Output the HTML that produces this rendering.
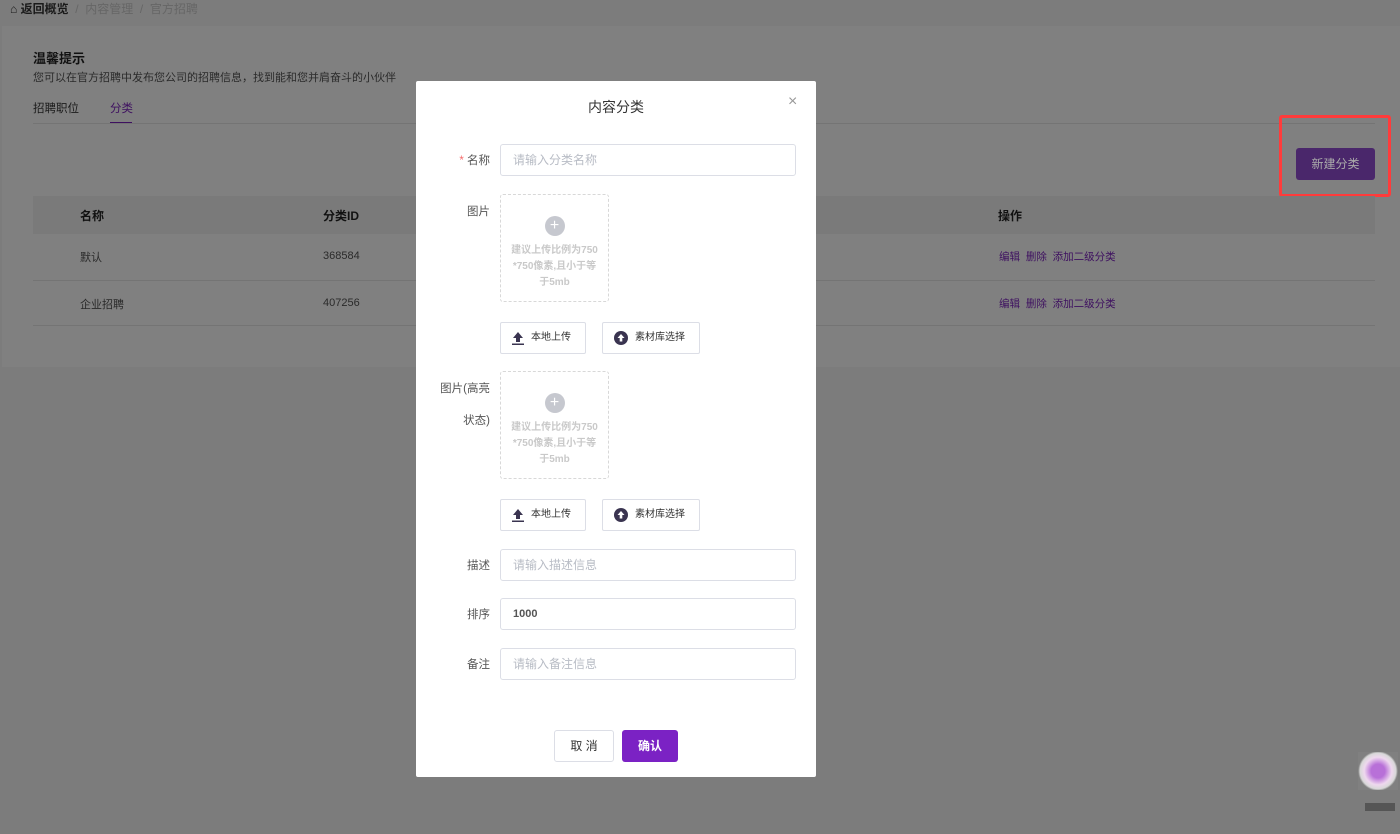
<!DOCTYPE html>
<html><head><meta charset="utf-8"><style>
*{box-sizing:border-box;margin:0;padding:0}
body{width:1400px;height:834px;background:#7c7c7c;font-family:"Liberation Sans","Noto Sans CJK SC",sans-serif;font-size:12px;color:#2a2a2a;position:relative;overflow:hidden}
.abs{position:absolute}
.card{left:2px;top:26px;width:1398px;height:341px;background:#808080}
.th{left:33px;top:196px;width:1342px;height:38px;background:#7a7a7a}
.line{height:1px;background:#747474}
.link{color:#3e1060;font-size:10.5px}
.modal{left:416px;top:81px;width:400px;height:696px;background:#fff;border-radius:2px}
.lbl{font-size:11.5px;color:#555;text-align:right;width:74px}
.inp{left:84px;width:296px;height:32px;border:1px solid #dcdee6;border-radius:3px;font-size:12px;color:#b8bcc5;padding-left:12px;line-height:30px}
.up{left:84px;width:109px;height:108px;border:1px dashed #d8d8d8;border-radius:3px;text-align:center;color:#c9c9c9;font-size:10px;line-height:16px;font-weight:bold;padding-top:21px}
.plus{width:20px;height:20px;border-radius:50%;background:#c6c8cf;margin:0 auto 7px;color:#fff;line-height:20px;font-size:16px;font-weight:normal}
.btn{height:32px;border:1px solid #dcdee6;border-radius:2px;font-size:10px;color:#333;line-height:30px;display:flex;align-items:center;gap:6px}
</style></head><body>
<div class="abs" style="left:10px;top:0;font-size:12px;color:#1a1a1a;font-weight:bold">⌂ 返回概览 <span style="color:#666;font-weight:normal">&nbsp;/&nbsp; 内容管理 &nbsp;/&nbsp; 官方招聘</span></div>
<div class="abs card"></div>
<div class="abs" style="left:33px;top:48px;font-size:13px;font-weight:bold;color:#111">温馨提示</div>
<div class="abs" style="left:33px;top:69px;font-size:11px;color:#2a2a2a">您可以在官方招聘中发布您公司的招聘信息，找到能和您并肩奋斗的小伙伴</div>
<div class="abs" style="left:33px;top:100px;color:#1a1a1a;font-size:11.5px">招聘职位</div>
<div class="abs" style="left:110px;top:100px;color:#3e1060;font-size:11.5px">分类</div>
<div class="abs" style="left:110px;top:122px;width:22px;height:2px;background:#3e1060"></div>
<div class="abs line" style="left:33px;top:123px;width:1342px"></div>
<div class="abs" style="left:1279px;top:115px;width:112px;height:82px;border:3px solid #ff3b3b;border-radius:3px"></div>
<div class="abs" style="left:1296px;top:148px;width:79px;height:32px;background:#4a276b;border-radius:3px;color:#aaa;font-size:12px;text-align:center;line-height:32px">新建分类</div>
<div class="abs th"></div>
<div class="abs" style="left:80px;top:207px;font-weight:bold;color:#111">名称</div>
<div class="abs" style="left:323px;top:207px;font-weight:bold;color:#111">分类ID</div>
<div class="abs" style="left:998px;top:207px;font-weight:bold;color:#111">操作</div>
<div class="abs" style="left:80px;top:249px;font-size:11px">默认</div><div class="abs" style="left:323px;top:250px;font-size:11px">368584</div>
<div class="abs link" style="left:999px;top:249px">编辑 &nbsp;删除 &nbsp;添加二级分类</div>
<div class="abs line" style="left:33px;top:280px;width:1342px"></div>
<div class="abs" style="left:80px;top:296px;font-size:11px">企业招聘</div><div class="abs" style="left:323px;top:297px;font-size:11px">407256</div>
<div class="abs link" style="left:999px;top:296px">编辑 &nbsp;删除 &nbsp;添加二级分类</div>
<div class="abs line" style="left:33px;top:325px;width:1342px"></div>
<div class="abs" style="left:1358px;top:752px;width:40px;height:38px;background:radial-gradient(circle,#b870d8 0 25%,#eed8ee 50%,#d8d8d8 65%,#808080 72%)"></div>
<div class="abs" style="left:1365px;top:803px;width:30px;height:8px;background:#555"></div>

<div class="abs modal">
<div class="abs" style="left:0;width:400px;top:16px;text-align:center;font-size:14px;color:#333">内容分类</div>
<div class="abs" style="left:372px;top:12px;font-size:16px;color:#999">×</div>
<div class="abs lbl" style="top:71px"><span style="color:#f56c6c">*</span> 名称</div>
<div class="abs inp" style="top:63px">请输入分类名称</div>
<div class="abs lbl" style="top:122px">图片</div>
<div class="abs up" style="top:113px"><div class="plus">+</div>建议上传比例为750<br>*750像素,且小于等<br>于5mb</div>
<div class="abs btn" style="left:84px;top:241px;width:86px;padding-left:10px"><svg width="14" height="14"><path d="M7 1L12 7H9V11H5V7H2Z" fill="#3a3450"/><rect x="1" y="12.5" width="12" height="1.5" fill="#3a3450"/></svg>本地上传</div>
<div class="abs btn" style="left:186px;top:241px;width:98px;padding-left:10px"><svg width="16" height="16"><circle cx="8" cy="8" r="7" fill="#3a3450"/><path d="M8 4L11.5 8H9.3V11.5H6.7V8H4.5Z" fill="#fff"/></svg>素材库选择</div>
<div class="abs lbl" style="top:299px">图片(高亮</div>
<div class="abs lbl" style="top:331px">状态)</div>
<div class="abs up" style="top:290px"><div class="plus">+</div>建议上传比例为750<br>*750像素,且小于等<br>于5mb</div>
<div class="abs btn" style="left:84px;top:418px;width:86px;padding-left:10px"><svg width="14" height="14"><path d="M7 1L12 7H9V11H5V7H2Z" fill="#3a3450"/><rect x="1" y="12.5" width="12" height="1.5" fill="#3a3450"/></svg>本地上传</div>
<div class="abs btn" style="left:186px;top:418px;width:98px;padding-left:10px"><svg width="16" height="16"><circle cx="8" cy="8" r="7" fill="#3a3450"/><path d="M8 4L11.5 8H9.3V11.5H6.7V8H4.5Z" fill="#fff"/></svg>素材库选择</div>
<div class="abs lbl" style="top:476px">描述</div>
<div class="abs inp" style="top:468px">请输入描述信息</div>
<div class="abs lbl" style="top:525px">排序</div>
<div class="abs inp" style="top:517px;color:#555;font-weight:bold;font-size:11px">1000</div>
<div class="abs lbl" style="top:575px">备注</div>
<div class="abs inp" style="top:567px">请输入备注信息</div>
<div class="abs" style="left:138px;top:649px;width:60px;height:32px;border:1px solid #dcdee6;border-radius:3px;text-align:center;line-height:30px;color:#333">取 消</div>
<div class="abs" style="left:206px;top:649px;width:56px;height:32px;background:#7b22c4;border-radius:3px;text-align:center;line-height:32px;color:#fff;font-weight:bold">确认</div>
</div>
</body></html>
